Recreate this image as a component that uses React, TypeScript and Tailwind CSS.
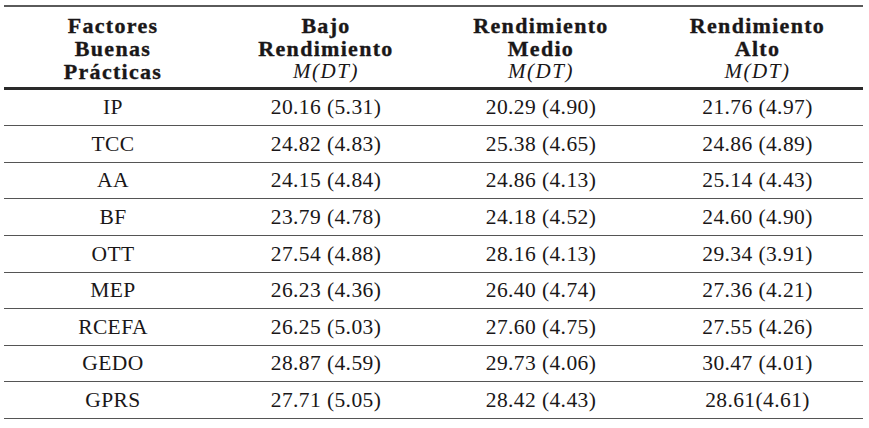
const rows = [
  { f: "IP", b: "20.16 (5.31)", m: "20.29 (4.90)", a: "21.76 (4.97)", h: "h-[36px]" },
  { f: "TCC", b: "24.82 (4.83)", m: "25.38 (4.65)", a: "24.86 (4.89)", h: "h-[37px]" },
  { f: "AA", b: "24.15 (4.84)", m: "24.86 (4.13)", a: "25.14 (4.43)", h: "h-[36px]" },
  { f: "BF", b: "23.79 (4.78)", m: "24.18 (4.52)", a: "24.60 (4.90)", h: "h-[37px]" },
  { f: "OTT", b: "27.54 (4.88)", m: "28.16 (4.13)", a: "29.34 (3.91)", h: "h-[37px]" },
  { f: "MEP", b: "26.23 (4.36)", m: "26.40 (4.74)", a: "27.36 (4.21)", h: "h-[36px]" },
  { f: "RCEFA", b: "26.25 (5.03)", m: "27.60 (4.75)", a: "27.55 (4.26)", h: "h-[37px]" },
  { f: "GEDO", b: "28.87 (4.59)", m: "29.73 (4.06)", a: "30.47 (4.01)", h: "h-[36px]" },
  { f: "GPRS", b: "27.71 (5.05)", m: "28.42 (4.43)", a: "28.61(4.61)", h: "h-[37px]" },
];

const cols = "grid grid-cols-[218px_208px_222px_211px]";

const Head = ({ lines, italic = true }: { lines: string[]; italic?: boolean }) => (
  <div className="flex flex-col items-center text-center">
    {lines.map((l) => (
      <span
        key={l}
        className="font-bold text-[22px] leading-[23px] tracking-[1.3px] [-webkit-text-stroke:0.35px_#1a1718]"
      >
        {l}
      </span>
    ))}
    {italic && (
      <span className="italic text-[21px] leading-[23px] tracking-[1.5px]">M(DT)</span>
    )}
  </div>
);

export default function App() {
  return (
    <div className="w-[869px] h-[428px] bg-white pt-[5px] pl-[4px] text-[#1a1718] font-['Liberation_Serif',serif]">
      <div className="w-[859px] border-t-2 border-[#5a5a5a]">
        {/* header */}
        <div className={`${cols} pt-[7px] pb-[4px] border-b-[3px] border-[#2a2a2a]`}>
          <Head lines={["Factores", "Buenas", "Prácticas"]} italic={false} />
          <Head lines={["Bajo", "Rendimiento"]} />
          <Head lines={["Rendimiento", "Medio"]} />
          <Head lines={["Rendimiento", "Alto"]} />
        </div>
        {rows.map((r) => (
          <div
            key={r.f}
            className={`${cols} ${r.h} items-center border-b-[1.5px] border-[#555] text-[21.5px] tracking-[0.4px]`}
          >
            <div className="text-center">{r.f}</div>
            <div className="text-center">{r.b}</div>
            <div className="text-center">{r.m}</div>
            <div className="text-center">{r.a}</div>
          </div>
        ))}
      </div>
    </div>
  );
}
